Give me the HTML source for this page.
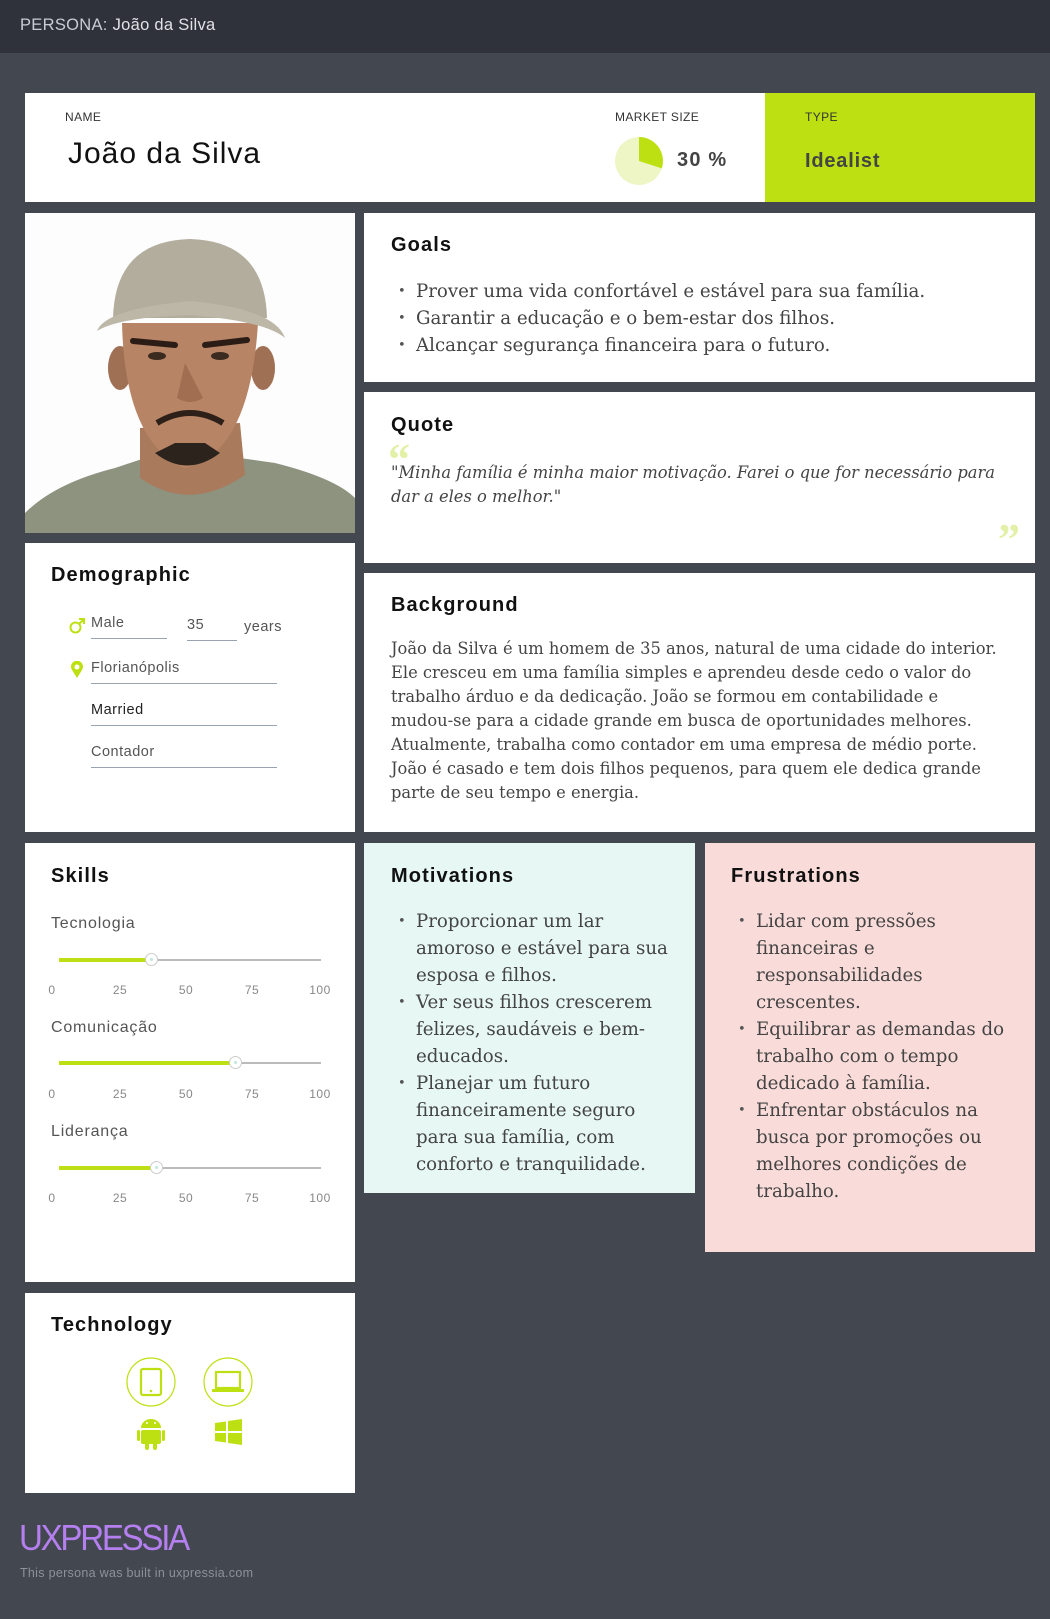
<!DOCTYPE html>
<html><head><meta charset="utf-8"><style>
*{margin:0;padding:0;box-sizing:border-box}
body{width:1050px;height:1619px;background:#434750;position:relative;overflow:hidden;font-family:"Liberation Sans",sans-serif}
.a{position:absolute}
.card{position:absolute;background:#fff}
h2{position:absolute;font-size:20px;font-weight:bold;color:#111;letter-spacing:1.1px}
.ser{font-family:"DejaVu Serif",serif;color:#444;font-size:18.2px;line-height:27px}
ul.ser{list-style:none}
ul.ser li{position:relative;padding-left:25px}
ul.ser li:before{content:"•";position:absolute;left:7px;font-size:13px;color:#555}
.lbl{font-size:12px;color:#333;letter-spacing:.4px}
.fld{position:absolute;font-size:14.5px;color:#555;border-bottom:1px solid #9aa3b0;height:24px;letter-spacing:.5px}
.track{position:absolute;left:59px;width:262px;height:2px;background:#bbb}
.fill{position:absolute;left:59px;height:4px;background:#bde012}
.thumb{position:absolute;width:13px;height:13px;border-radius:50%;background:#fff;border:1px solid #ccc}
.thumb:after{content:"";position:absolute;left:4px;top:4px;width:3px;height:3px;border-radius:50%;background:#bfe8e0}
.sk{position:absolute;left:51px;font-size:16px;color:#555;letter-spacing:.8px}
.tk{position:absolute;font-size:12px;color:#888;width:40px;text-align:center;letter-spacing:.5px}
.q{position:absolute;font-family:"Liberation Serif",serif;font-weight:bold;font-size:44px;color:#e3f0a8;line-height:44px}
</style></head><body>
<div class="a" style="left:0;top:0;width:1050px;height:53px;background:#2f323a"></div>
<div class="a" style="left:20px;top:16px;font-size:16.5px;color:#c9ccd2;letter-spacing:.3px">PERSONA: <span style="color:#e0e2e6">João da Silva</span></div>

<div class="card" style="left:25px;top:93px;width:1010px;height:109px"></div>
<div class="a lbl" style="left:65px;top:110px">NAME</div>
<div class="a" style="left:68px;top:137px;font-size:30px;color:#111;letter-spacing:1px">João da Silva</div>
<div class="a lbl" style="left:615px;top:110px">MARKET SIZE</div>
<svg class="a" style="left:614px;top:136px" width="50" height="50"><circle cx="25" cy="25" r="24" fill="#eef6c6"/><path d="M25 25 L25 1 A24 24 0 0 1 47.8 32.4 Z" fill="#bde012"/></svg>
<div class="a" style="left:677px;top:149px;font-size:20px;font-weight:bold;color:#444;letter-spacing:1.2px">30 %</div>
<div class="a" style="left:765px;top:93px;width:270px;height:109px;background:#bde012"></div>
<div class="a lbl" style="left:805px;top:110px">TYPE</div>
<div class="a" style="left:805px;top:150px;font-size:20px;font-weight:bold;color:#444;letter-spacing:.8px">Idealist</div>

<!-- photo -->
<div class="card" style="left:25px;top:213px;width:330px;height:320px;overflow:hidden">
<svg width="330" height="320" viewBox="0 0 330 320">
<rect width="330" height="320" fill="#fdfdfd"/>
<path d="M0 300 Q30 270 90 255 L120 245 Q165 265 215 245 L250 250 Q310 265 330 285 L330 320 L0 320Z" fill="#8e9380"/>
<path d="M115 215 L115 265 Q165 300 220 262 L215 210Z" fill="#a97a5c"/>
<ellipse cx="95" cy="155" rx="12" ry="22" fill="#a07055"/>
<ellipse cx="238" cy="155" rx="12" ry="22" fill="#a07055"/>
<path d="M97 110 Q100 230 160 255 Q225 240 233 110Z" fill="#b88466"/>
<path d="M108 128 L150 132 M180 132 L222 127" stroke="#2b1d16" stroke-width="6" stroke-linecap="round"/>
<ellipse cx="132" cy="143" rx="9" ry="4" fill="#3a2a20"/><ellipse cx="195" cy="143" rx="9" ry="4" fill="#3a2a20"/>
<path d="M160 150 L152 185 Q165 193 178 185Z" fill="#a26e52"/>
<path d="M132 210 Q165 190 198 210" stroke="#2d2018" stroke-width="6" fill="none"/>
<path d="M130 240 Q162 265 195 240 L180 230 L150 230Z" fill="#2c231d"/>
<path d="M88 105 Q90 28 165 26 Q240 28 242 105Z" fill="#b3ad9d"/>
<path d="M72 118 Q80 96 165 88 Q250 96 260 125 Q240 108 165 102 Q95 104 72 118Z" fill="#bcb7a7"/>
</svg></div>

<!-- goals -->
<div class="card" style="left:364px;top:213px;width:671px;height:169px"></div>
<h2 style="left:391px;top:234px">Goals</h2>
<ul class="ser a" style="left:391px;top:278px;width:630px">
<li>Prover uma vida confortável e estável para sua família.</li>
<li>Garantir a educação e o bem-estar dos filhos.</li>
<li>Alcançar segurança financeira para o futuro.</li></ul>

<!-- quote -->
<div class="card" style="left:364px;top:392px;width:671px;height:171px"></div>
<h2 style="left:391px;top:414px">Quote</h2>
<div class="q" style="left:388px;top:438px">“</div>
<div class="a ser" style="left:391px;top:461px;width:630px;font-style:italic;line-height:24px;font-size:16.3px">"Minha família é minha maior motivação. Farei o que for necessário para dar a eles o melhor."</div>
<div class="q" style="left:998px;top:518px">”</div>

<!-- demographic -->
<div class="card" style="left:25px;top:543px;width:330px;height:289px"></div>
<h2 style="left:51px;top:564px">Demographic</h2>
<svg class="a" style="left:69px;top:617px" width="17" height="17"><circle cx="6.5" cy="10.5" r="5" fill="none" stroke="#bde012" stroke-width="2"/><path d="M10 7 L15 2 M10 2 H15 V7" stroke="#bde012" stroke-width="2" fill="none"/></svg>
<div class="fld" style="left:91px;top:615px;width:76px">Male</div>
<div class="fld" style="left:187px;top:617px;width:50px">35</div>
<div class="a" style="left:244px;top:619px;font-size:14.5px;color:#555;letter-spacing:.5px">years</div>
<svg class="a" style="left:70px;top:661px" width="14" height="18"><path d="M7 17 L2 9 A6 6 0 1 1 12 9Z" fill="#bde012"/><circle cx="7" cy="6" r="2.5" fill="#fff"/></svg>
<div class="fld" style="left:91px;top:660px;width:186px">Florianópolis</div>
<div class="fld" style="left:91px;top:702px;width:186px;color:#222">Married</div>
<div class="fld" style="left:91px;top:744px;width:186px">Contador</div>

<!-- background -->
<div class="card" style="left:364px;top:573px;width:671px;height:259px"></div>
<h2 style="left:391px;top:594px">Background</h2>
<div class="a ser" style="left:391px;top:637px;width:612px;font-size:16.3px;line-height:24px">João da Silva é um homem de 35 anos, natural de uma cidade do interior. Ele cresceu em uma família simples e aprendeu desde cedo o valor do trabalho árduo e da dedicação. João se formou em contabilidade e mudou-se para a cidade grande em busca de oportunidades melhores. Atualmente, trabalha como contador em uma empresa de médio porte. João é casado e tem dois filhos pequenos, para quem ele dedica grande parte de seu tempo e energia.</div>

<!-- skills -->
<div class="card" style="left:25px;top:843px;width:330px;height:439px"></div>
<h2 style="left:51px;top:865px">Skills</h2>
<div class="sk" style="top:915px">Tecnologia</div>
<div class="track" style="top:959px"></div><div class="fill" style="top:958px;width:93px"></div><div class="thumb" style="left:145px;top:953px"></div>
<div class="sk" style="top:1019px">Comunicação</div>
<div class="track" style="top:1062px"></div><div class="fill" style="top:1061px;width:177px"></div><div class="thumb" style="left:229px;top:1056px"></div>
<div class="sk" style="top:1123px">Liderança</div>
<div class="track" style="top:1167px"></div><div class="fill" style="top:1166px;width:98px"></div><div class="thumb" style="left:150px;top:1161px"></div>
<div class="a" style="left:0;top:0">
<div class="tk" style="left:32px;top:983px">0</div><div class="tk" style="left:100px;top:983px">25</div><div class="tk" style="left:166px;top:983px">50</div><div class="tk" style="left:232px;top:983px">75</div><div class="tk" style="left:300px;top:983px">100</div>
<div class="tk" style="left:32px;top:1087px">0</div><div class="tk" style="left:100px;top:1087px">25</div><div class="tk" style="left:166px;top:1087px">50</div><div class="tk" style="left:232px;top:1087px">75</div><div class="tk" style="left:300px;top:1087px">100</div>
<div class="tk" style="left:32px;top:1191px">0</div><div class="tk" style="left:100px;top:1191px">25</div><div class="tk" style="left:166px;top:1191px">50</div><div class="tk" style="left:232px;top:1191px">75</div><div class="tk" style="left:300px;top:1191px">100</div>
</div>

<!-- technology -->
<div class="card" style="left:25px;top:1293px;width:330px;height:200px"></div>
<h2 style="left:51px;top:1314px">Technology</h2>
<svg class="a" style="left:0;top:0" width="360" height="1500">
<g fill="none" stroke="#bde012">
<circle cx="151" cy="1382" r="24" stroke-width="1.2"/><circle cx="228" cy="1382" r="24" stroke-width="1.2"/>
<rect x="141" y="1369" width="20" height="26" rx="2" stroke-width="2.2"/>
<rect x="216" y="1372" width="24" height="16" stroke-width="2.2"/>
</g>
<circle cx="151" cy="1391" r="1.3" fill="#bde012"/>
<rect x="212" y="1389" width="32" height="3" fill="#bde012"/>
<g fill="#bde012">
<path d="M141 1428 A10 9 0 0 1 161 1428Z"/>
<rect x="141" y="1430" width="20" height="14" rx="2"/>
<rect x="137" y="1430" width="3" height="11" rx="1.5"/><rect x="162" y="1430" width="3" height="11" rx="1.5"/>
<rect x="145" y="1442" width="4" height="8" rx="2"/><rect x="153" y="1442" width="4" height="8" rx="2"/>
<path d="M215 1423 L226 1421.5 V1431 H215Z M228 1421 L242 1419 V1431 H228Z M215 1433 H226 V1442.5 L215 1441Z M228 1433 H242 V1445 L228 1443Z"/>
</g>
<circle cx="147" cy="1423" r="1" fill="#fff"/><circle cx="155" cy="1423" r="1" fill="#fff"/>
</svg>

<!-- motivations -->
<div class="card" style="left:364px;top:843px;width:331px;height:350px;background:#e6f7f4"></div>
<h2 style="left:391px;top:865px">Motivations</h2>
<ul class="ser a" style="left:391px;top:908px;width:282px">
<li>Proporcionar um lar amoroso e estável para sua esposa e filhos.</li>
<li>Ver seus filhos crescerem felizes, saudáveis e bem-educados.</li>
<li>Planejar um futuro financeiramente seguro para sua família, com conforto e tranquilidade.</li></ul>

<!-- frustrations -->
<div class="card" style="left:705px;top:843px;width:330px;height:409px;background:#f9dcd9"></div>
<h2 style="left:731px;top:865px">Frustrations</h2>
<ul class="ser a" style="left:731px;top:908px;width:292px">
<li>Lidar com pressões financeiras e responsabilidades crescentes.</li>
<li>Equilibrar as demandas do trabalho com o tempo dedicado à família.</li>
<li>Enfrentar obstáculos na busca por promoções ou melhores condições de trabalho.</li></ul>

<div class="a" style="left:19px;top:1517px;font-size:36px;color:#b57ff0;letter-spacing:-2.5px;transform:scaleX(.92);transform-origin:left">UXPRESSIA</div>
<div class="a" style="left:20px;top:1566px;font-size:12.5px;color:#8d9199;letter-spacing:.3px">This persona was built in uxpressia.com</div>
</body></html>
